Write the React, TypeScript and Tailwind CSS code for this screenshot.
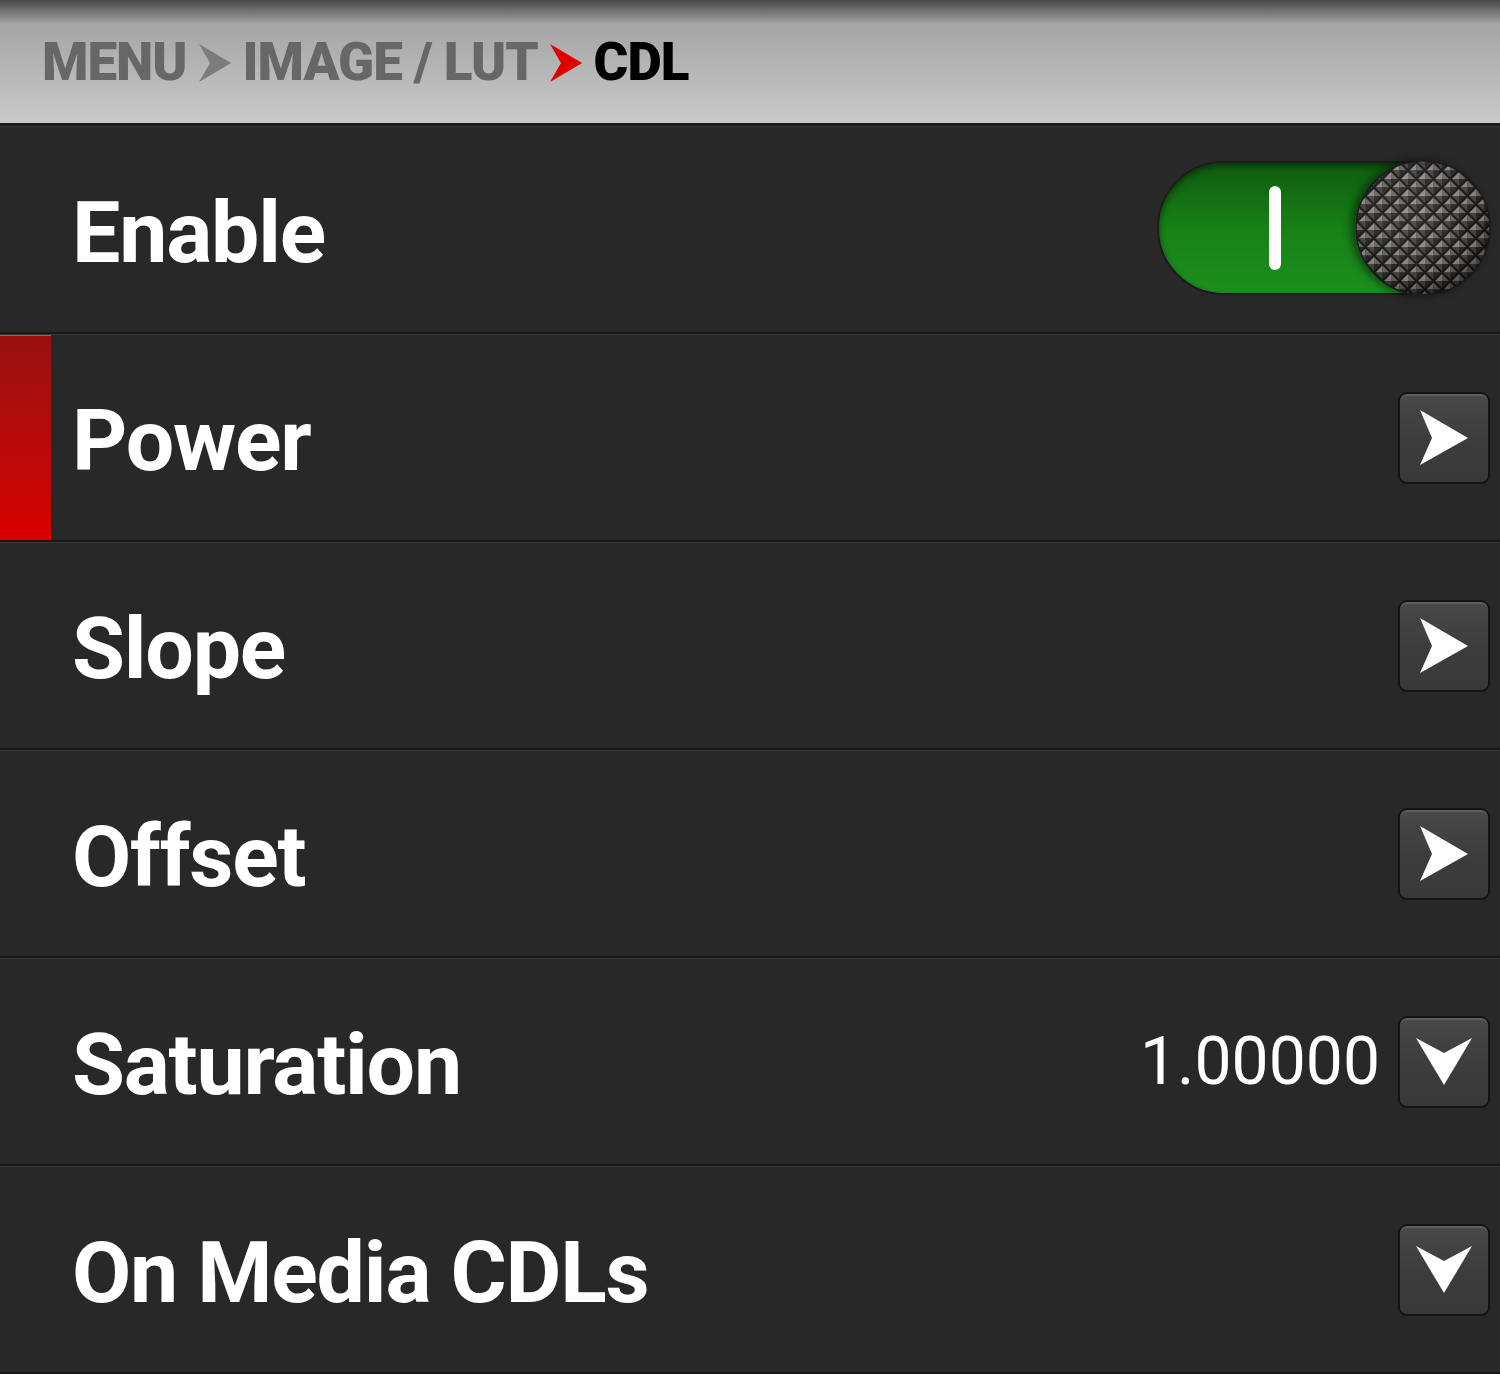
import React from "react";

const font = { fontFamily: "Roboto, 'Liberation Sans', sans-serif" };

function Chevron({ color }: { color: string }) {
  return (
    <svg width="34" height="40" viewBox="0 0 34 40" className="shrink-0">
      <path d="M1 1 L33 20 L1 39 L12 20 Z" fill={color} />
    </svg>
  );
}

function Knob() {
  return (
    <svg width="136" height="136" viewBox="0 0 136 136" className="block">
      <defs>
        <pattern id="knurl" width="17" height="17" patternUnits="userSpaceOnUse" x="2" y="2">
          <rect width="17" height="17" fill="#1a1a1a" />
          {[
            [8.5, 8.5],
            [0, 0],
            [17, 0],
            [0, 17],
            [17, 17],
          ].map(([cx, cy], i) => (
            <g key={i} transform={`translate(${cx - 8.5} ${cy - 8.5})`}>
              <path d="M1.5 8.5 L8.5 1.5 L8.5 8.5 Z" fill="#938e88" />
              <path d="M8.5 1.5 L15.5 8.5 L8.5 8.5 Z" fill="#6e6a65" />
              <path d="M15.5 8.5 L8.5 15.5 L8.5 8.5 Z" fill="#2c2a28" />
              <path d="M8.5 15.5 L1.5 8.5 L8.5 8.5 Z" fill="#4a4743" />
            </g>
          ))}
        </pattern>
        <radialGradient id="shade" cx="40%" cy="35%" r="70%">
          <stop offset="0%" stopColor="#ffffff" stopOpacity="0.05" />
          <stop offset="75%" stopColor="#000000" stopOpacity="0.1" />
          <stop offset="100%" stopColor="#000000" stopOpacity="0.55" />
        </radialGradient>
      </defs>
      <circle cx="68" cy="68" r="67" fill="url(#knurl)" />
      <circle cx="68" cy="68" r="67" fill="url(#shade)" />
      <circle cx="68" cy="68" r="67" fill="none" stroke="#1a1a1a" strokeWidth="1.5" />
    </svg>
  );
}

function Toggle() {
  return (
    <div className="relative -mr-[1px] mt-[-4px] h-[136px] w-[334px]">
      <div className="absolute left-0 top-[1px] h-[134px] w-[330px] rounded-full border-2 border-[#1c1c1c] bg-gradient-to-b from-[#0f5c0f] via-[#178017] to-[#1d901d] shadow-[inset_0_3px_6px_rgba(0,0,0,0.45)]">
        <div className="absolute left-[110px] top-[23px] h-[84px] w-[12px] rounded-full bg-white" />
      </div>
      <div className="absolute right-0 top-0 rounded-full shadow-[-4px_0_8px_rgba(0,0,0,0.5)]">
        <Knob />
      </div>
    </div>
  );
}

const btn =
  "flex h-[92px] w-[92px] shrink-0 items-center justify-center rounded-[9px] border-2 border-[#121212] bg-gradient-to-b from-[#484848] via-[#3d3d3d] to-[#393939] shadow-[inset_0_2px_0_rgba(255,255,255,0.12)]";

function RightArrow() {
  return (
    <div className={btn}>
      <svg width="50" height="58" viewBox="0 0 50 58">
        <path d="M1 1 L49 29 L1 56 L13 29 Z" fill="#fff" />
      </svg>
    </div>
  );
}

function DownArrow() {
  return (
    <div className={btn}>
      <svg width="58" height="50" viewBox="0 0 58 50">
        <path d="M1 1 L29 16 L57 1 L29 48 Z" fill="#fff" />
      </svg>
    </div>
  );
}

type Row = {
  label: string;
  right: React.ReactNode;
  selected?: boolean;
};

const rows: Row[] = [
  { label: "Enable", right: <Toggle /> },
  { label: "Power", right: <RightArrow />, selected: true },
  { label: "Slope", right: <RightArrow /> },
  { label: "Offset", right: <RightArrow /> },
  {
    label: "Saturation",
    right: (
      <div className="flex items-center gap-[18px]">
        <span className="text-[66px] font-normal leading-none text-white">1.00000</span>
        <DownArrow />
      </div>
    ),
  },
  { label: "On Media CDLs", right: <DownArrow /> },
];

export default function App() {
  return (
    <div className="h-[1374px] w-[1500px] overflow-hidden bg-[#282828]" style={font}>
      <div className="flex h-[126px] items-center gap-[11px] border-b-[3px] border-[#1c1c1c] bg-gradient-to-b from-[#4a4a4a] via-[#a6a6a6] via-20% to-[#c9c9c9] pl-[42px] pt-[2px]">
        <span className="text-[53px] font-black leading-none tracking-[-1px] text-[#676767]">MENU</span>
        <Chevron color="#7c7c7c" />
        <span className="text-[53px] font-black leading-none tracking-[-1px] text-[#676767]">IMAGE / LUT</span>
        <Chevron color="#e00000" />
        <span className="text-[53px] font-black leading-none tracking-[-1px] text-black">CDL</span>
      </div>
      {rows.map((r) => (
        <div
          key={r.label}
          className="flex h-[208px] items-stretch border-b-2 border-t border-b-[#181818] border-t-[#363636] bg-[#282828]"
        >
          <div
            className={
              r.selected
                ? "w-[51px] shrink-0 border-t border-[#c84a4a] bg-gradient-to-b from-[#981010] to-[#d80000]"
                : "w-[51px] shrink-0"
            }
          />
          <div className="flex flex-1 items-center justify-between pl-[21px] pr-[10px]">
            <span className="pt-[6px] text-[86px] font-bold leading-none tracking-[-1.2px] text-white">{r.label}</span>
            {r.right}
          </div>
        </div>
      ))}
    </div>
  );
}
